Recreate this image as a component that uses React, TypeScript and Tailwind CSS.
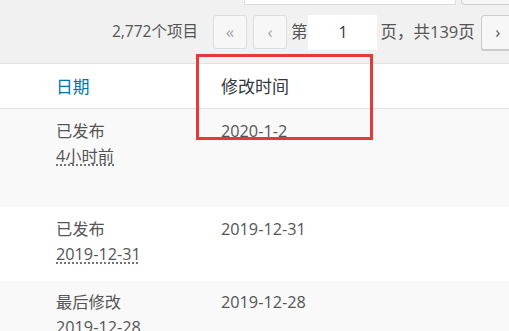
import React from "react";

const font = { fontFamily: '"Open Sans", "Noto Sans CJK SC", sans-serif' };

export default function App() {
  return (
    <div
      className="relative w-[509px] h-[331px] overflow-hidden bg-[#f1f1f1] text-[#555]"
      style={font}
    >
      {/* top search strip, partially visible */}
      <div className="flex items-end h-[5px] pl-[244px] gap-[5px]">
        <div className="w-[212px] h-[30px] bg-white border border-[#ddd] shrink-0" />
        <div className="w-[80px] h-[30px] bg-[#f7f7f7] border border-[#ccc] rounded-[4px] shrink-0" />
      </div>

      {/* pagination row */}
      <div className="flex items-center h-[58px] pl-[112px] pb-[4px] whitespace-nowrap">
        <span className="text-[15.5px] mr-[15px]">2,772个项目</span>
        <span className="flex items-center justify-center w-[34px] h-[34px] border border-[#ddd] bg-[#f7f7f7] rounded-[3px] text-[#a0a5aa] text-[17px] shrink-0">
          «
        </span>
        <span className="flex items-center justify-center w-[34px] h-[34px] ml-[6px] border border-[#ddd] bg-[#f7f7f7] rounded-[3px] text-[#a0a5aa] text-[17px] shrink-0">
          ‹
        </span>
        <span className="ml-[4px] text-[16.5px]">第</span>
        <span className="flex items-center justify-center w-[71px] h-[37px] bg-white border border-[#f0f0f0] text-[16px] text-[#32373c] shrink-0">
          1
        </span>
        <span className="ml-[2px] text-[16.5px]">页，共139页</span>
        <span className="flex items-center justify-center w-[34px] h-[35px] ml-[6px] border border-[#ccc] bg-[#f7f7f7] rounded-[3px] text-[#555] text-[17px] shadow-[0_1px_0_#ccc] shrink-0">
          ›
        </span>
        <span className="flex items-center justify-center w-[34px] h-[35px] ml-[6px] border border-[#ccc] bg-[#f7f7f7] rounded-[3px] text-[#555] text-[17px] shrink-0">
          »
        </span>
      </div>

      {/* table */}
      <div className="border-t border-[#e1e1e1] text-[16.25px] leading-[25px]">
        <div className="flex items-center h-[45px] bg-white border-b border-[#e1e1e1] pl-[56px]">
          <span className="w-[165px] text-[#0073aa] text-[16.75px]">日期</span>
          <span className="text-[#32373c] text-[17px]">修改时间</span>
        </div>

        <div className="flex h-[98px] bg-[#f9f9f9] pl-[56px] pt-[10px]">
          <div className="w-[165px] flex flex-col">
            <span>已发布</span>
            <span className="underline decoration-dotted underline-offset-[3px] self-start">4小时前</span>
          </div>
          <span>2020-1-2</span>
        </div>

        <div className="flex h-[74px] bg-white pl-[56px] pt-[10px]">
          <div className="w-[165px] flex flex-col">
            <span>已发布</span>
            <span className="underline decoration-dotted underline-offset-[3px] self-start">2019-12-31</span>
          </div>
          <span>2019-12-31</span>
        </div>

        <div className="flex h-[98px] bg-[#f9f9f9] pl-[56px] pt-[9px]">
          <div className="w-[165px] flex flex-col">
            <span>最后修改</span>
            <span className="underline decoration-dotted underline-offset-[3px] self-start">2019-12-28</span>
          </div>
          <span>2019-12-28</span>
        </div>
      </div>

      {/* red highlight box */}
      <div className="absolute left-[196px] top-[54px] w-[177px] h-[86px] border-[3px] border-[#e53a3a]" />
    </div>
  );
}
